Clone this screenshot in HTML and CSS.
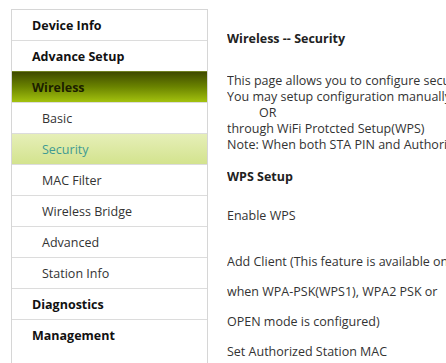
FILE: index.html
```html
<!DOCTYPE html>
<html>
<head>
    <title>Wireless -- Security</title>
    <link rel="stylesheet" href="styles.css">
</head>
<body>
    <div class="layout">
        <ul class="menu">
            <li class="top">Device Info</li>
            <li class="top">Advance Setup</li>
            <li class="top open">Wireless</li>
            <li class="sub">Basic</li>
            <li class="sub current">Security</li>
            <li class="sub">MAC Filter</li>
            <li class="sub">Wireless Bridge</li>
            <li class="sub">Advanced</li>
            <li class="sub">Station Info</li>
            <li class="top">Diagnostics</li>
            <li class="top">Management</li>
        </ul>

        <div class="content">
            <h2>Wireless -- Security</h2>
            <p class="intro">
                This page allows you to configure security features of the wireless LAN interface.<br>
                You may setup configuration manually<br>
                <span class="or">OR</span><br>
                through WiFi Protcted Setup(WPS)<br>
                Note: When both STA PIN and Authorized MAC are empty, PBC is used.
            </p>
            <h3>WPS Setup</h3>
            <table class="wps">
                <tr class="gap"><td>Enable WPS</td></tr>
                <tr><td>Add Client (This feature is available only</td></tr>
                <tr><td>when WPA-PSK(WPS1), WPA2 PSK or</td></tr>
                <tr><td>OPEN mode is configured)</td></tr>
                <tr><td>Set Authorized Station MAC</td></tr>
            </table>
        </div>
    </div>
</body>
</html>
```

FILE: styles.css
```css
body {
    margin: 0;
    background: #fff;
    font-family: "Open Sans", "Noto Sans", sans-serif;
    font-size: 12.5px;
    color: #333;
    overflow: hidden;
}
.layout {
    display: flex;
    padding: 9px 0 0 11px;
    white-space: nowrap;
}
.menu {
    list-style: none;
    margin: 0;
    padding: 0;
    width: 195px;
    flex: none;
    border: 1px solid #d6d6d6;
    border-bottom-color: #e4e4e4;
}
.menu li {
    height: 28px;
    line-height: 28px;
    padding-top: 2px;
    border-top: 1px solid #dcdcdc;
    color: #222;
}
.menu li:first-child {
    border-top: none;
}
.menu .top {
    padding-left: 20px;
    font-weight: bold;
    color: #111;
}
.menu .sub {
    padding-left: 30px;
    color: #333;
}
.menu .open {
    background: linear-gradient(#3f4a00, #6b8400 50%, #a3c20e);
    border-top-color: #6f7f20;
    color: #1c2000;
}
.menu .current {
    background: linear-gradient(#e6efb8, #d3e38e);
    color: #3f9a93;
}
.content {
    margin-left: 19px;
    padding-top: 21px;
    min-width: 0;
    overflow: hidden;
}
.content h2,
.content h3 {
    margin: 0;
    font-size: 12.5px;
    font-weight: bold;
    color: #222;
    line-height: 18px;
}
.intro {
    margin: 25px 0 0;
    line-height: 16px;
}
.intro .or {
    padding-left: 32px;
}
.content h3 {
    margin-top: 15px;
}
.wps {
    border-collapse: collapse;
    margin-top: 15px;
}
.wps td {
    padding: 0;
    line-height: 30px;
    vertical-align: top;
}
.wps .gap td {
    padding-bottom: 16px;
}
```
